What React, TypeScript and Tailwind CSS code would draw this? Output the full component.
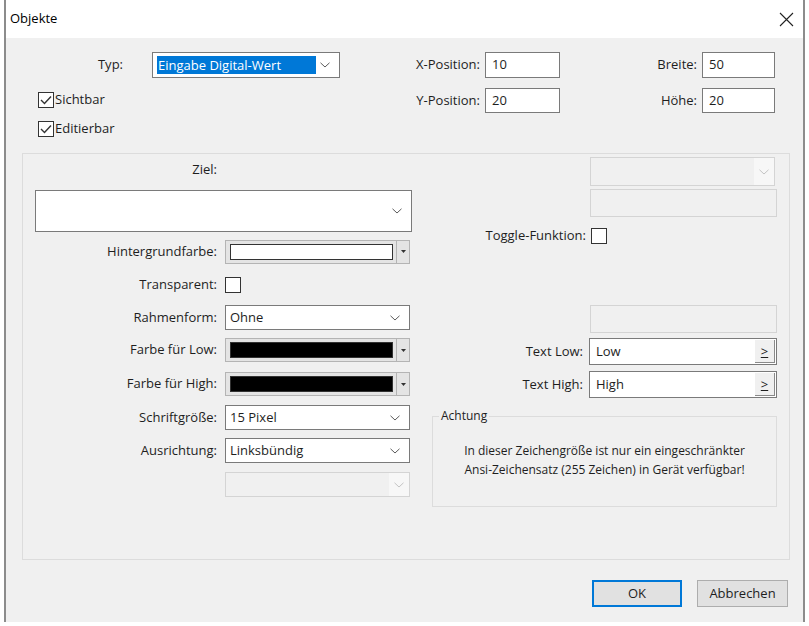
import React from 'react'

function Chevron({ light }: { light?: boolean }) {
  return (
    <svg width="10" height="6" viewBox="0 0 10 6" className="shrink-0">
      <path d="M0.5 0.8 L5 5 L9.5 0.8" stroke={light ? '#c4c4c4' : '#5a5a5a'} strokeWidth="1" fill="none" />
    </svg>
  )
}

function Combo({ value, className = '', selected }: { value?: string; className?: string; selected?: boolean }) {
  return (
    <div className={`flex items-center bg-white border border-[#7a7a7a] pr-[9px] ${className}`}>
      <div className="flex-1 pl-[4px] flex items-center">
        {selected ? (
          <span className="bg-[#0078d7] text-white px-[1px] leading-[18px] w-[159px]">{value}</span>
        ) : (
          <span>{value}</span>
        )}
      </div>
      <Chevron />
    </div>
  )
}

function DisabledCombo({ className = '' }: { className?: string }) {
  return (
    <div className={`flex items-center bg-[#f0f0f0] border border-[#d4d4d4] ${className}`}>
      <div className="flex-1" />
      <div className="h-full w-[20px] bg-[#f7f7f7] flex items-center justify-center">
        <Chevron light />
      </div>
    </div>
  )
}

function ColorPick({ color }: { color: string }) {
  return (
    <div className="flex items-center w-[185px] h-[24px] bg-[#e4e4e4] border border-[#b4b4b4]">
      <div className={`ml-[4px] w-[163px] h-[16px] border border-[#333] ${color}`} />
      <div className="ml-[3px] h-full border-l border-[#b4b4b4] flex-1 flex items-center justify-center">
        <svg width="5" height="3" viewBox="0 0 5 3">
          <path d="M0 0 L5 0 L2.5 3 Z" fill="#333" />
        </svg>
      </div>
    </div>
  )
}

function Check({ checked }: { checked?: boolean }) {
  return (
    <div className="w-[16px] h-[16px] border border-[#333] bg-white flex items-center justify-center shrink-0">
      {checked && (
        <svg width="12" height="10" viewBox="0 0 12 10">
          <path d="M1 5 L4.5 8.5 L11 1.5" stroke="#333" strokeWidth="1.4" fill="none" />
        </svg>
      )}
    </div>
  )
}

function TextBox({ value, className = '' }: { value: string; className?: string }) {
  return (
    <div className={`bg-white border border-[#7a7a7a] pl-[6px] flex items-center ${className}`}>{value}</div>
  )
}

function MoreField({ value }: { value: string }) {
  return (
    <div className="flex w-[188px] h-[27px] bg-white border border-[#7a7a7a]">
      <div className="flex-1 pl-[6px] flex items-center">{value}</div>
      <div className="w-[20px] m-[1px] bg-[#f0f0f0] border-r border-b border-[#8a8a8a] flex items-center justify-center text-[13px] leading-none">
        <span className="underline">&gt;</span>
      </div>
    </div>
  )
}

function Row({ label, children, className = '' }: { label: string; children: React.ReactNode; className?: string }) {
  return (
    <div className={`flex items-center ${className}`}>
      <div className="w-[182px] text-right">{label}</div>
      <div className="ml-[8px]">{children}</div>
    </div>
  )
}

export default function App() {
  return (
    <div className="w-[809px] h-[626px] bg-white overflow-hidden text-[13px] text-[#1e1e1e] font-['Open_Sans','Noto_Sans',sans-serif]">
      <div className="ml-[4px] w-[801px] h-[622px] border-x-2 border-[#8c8c8c] flex flex-col">
        {/* Titelleiste */}
        <div className="h-[38px] shrink-0 bg-white flex items-center justify-between pl-[4px] pr-[9px]">
          <span className="text-[13px] text-black">Objekte</span>
          <svg width="15" height="15" viewBox="0 0 15 15">
            <path d="M1 1 L14 14 M14 1 L1 14" stroke="#222" strokeWidth="1.1" />
          </svg>
        </div>

        <div className="flex-1 bg-[#f0f0f0] pt-[14px] flex flex-col">
          {/* Kopfbereich */}
          <div className="flex">
            <div className="w-[402px]">
              <div className="flex items-center h-[26px]">
                <div className="w-[117px] text-right">Typ:</div>
                <Combo value="Eingabe Digital-Wert" selected className="ml-[29px] w-[188px] h-[26px]" />
              </div>
              <div className="flex items-center gap-[1px] pl-[32px] mt-[14px] h-[16px]">
                <Check checked />
                <span>Sichtbar</span>
              </div>
              <div className="flex items-center gap-[1px] pl-[32px] mt-[13px] h-[16px]">
                <Check checked />
                <span>Editierbar</span>
              </div>
            </div>
            <div>
              <div className="flex items-center h-[26px]">
                <div className="w-[72px] text-right">X-Position:</div>
                <TextBox value="10" className="ml-[5px] w-[75px] h-[26px]" />
                <div className="w-[137px] text-right">Breite:</div>
                <TextBox value="50" className="ml-[5px] w-[73px] h-[26px]" />
              </div>
              <div className="flex items-center h-[25px] mt-[10px]">
                <div className="w-[72px] text-right">Y-Position:</div>
                <TextBox value="20" className="ml-[5px] w-[75px] h-[25px]" />
                <div className="w-[137px] text-right">Höhe:</div>
                <TextBox value="20" className="ml-[5px] w-[73px] h-[25px]" />
              </div>
            </div>
          </div>

          {/* Gruppe */}
          <div className="ml-[16px] mt-[16px] w-[768px] h-[407px] border border-[#dcdcdc] flex">
            <div className="w-[407px] pl-[12px]">
              <div className="mt-[6px] h-[20px] flex items-center">
                <div className="w-[182px] text-right">Ziel:</div>
              </div>
              <Combo className="mt-[10px] w-[377px] h-[42px]" />
              <Row label="Hintergrundfarbe:" className="mt-[8px] h-[23px]">
                <ColorPick color="bg-white" />
              </Row>
              <Row label="Transparent:" className="mt-[14px] h-[16px]">
                <Check />
              </Row>
              <Row label="Rahmenform:" className="mt-[12px] h-[25px]">
                <Combo value="Ohne" className="w-[185px] h-[25px]" />
              </Row>
              <Row label="Farbe für Low:" className="mt-[8px] h-[24px]">
                <ColorPick color="bg-black" />
              </Row>
              <Row label="Farbe für High:" className="mt-[10px] h-[24px]">
                <ColorPick color="bg-black" />
              </Row>
              <Row label="Schriftgröße:" className="mt-[9px] h-[25px]">
                <Combo value="15 Pixel" className="w-[185px] h-[25px]" />
              </Row>
              <Row label="Ausrichtung:" className="mt-[8px] h-[25px]">
                <Combo value="Linksbündig" className="w-[185px] h-[25px]" />
              </Row>
              <div className="mt-[9px] ml-[190px]">
                <DisabledCombo className="w-[185px] h-[25px]" />
              </div>
            </div>

            <div className="w-[347px]">
              <DisabledCombo className="ml-[160px] mt-[3px] w-[185px] h-[29px]" />
              <div className="ml-[160px] mt-[3px] w-[187px] h-[28px] bg-[#f0f0f0] border border-[#d4d4d4]" />
              <div className="flex items-center mt-[11px] h-[16px]">
                <div className="w-[156px] text-right">Toggle-Funktion:</div>
                <div className="ml-[5px]">
                  <Check />
                </div>
              </div>
              <div className="ml-[160px] mt-[61px] w-[187px] h-[28px] bg-[#f0f0f0] border border-[#d4d4d4]" />
              <div className="flex items-center mt-[5px] h-[27px]">
                <div className="w-[153px] text-right">Text Low:</div>
                <div className="ml-[6px]">
                  <MoreField value="Low" />
                </div>
              </div>
              <div className="flex items-center mt-[6px] h-[27px]">
                <div className="w-[153px] text-right">Text High:</div>
                <div className="ml-[6px]">
                  <MoreField value="High" />
                </div>
              </div>
              <fieldset className="ml-[2px] mt-[10px] w-[345px] h-[99px] border border-[#dcdcdc]">
                <legend className="ml-[6px] px-[2px] text-[12px] leading-[16px]">Achtung</legend>
                <div className="mt-[17px] text-center text-[12px] leading-[19px]">
                  In dieser Zeichengröße ist nur ein eingeschränkter
                  <br />
                  Ansi-Zeichensatz (255 Zeichen) in Gerät verfügbar!
                </div>
              </fieldset>
            </div>
          </div>

          {/* Schaltflächen */}
          <div className="flex justify-end gap-[15px] pr-[15px] mt-[20px]">
            <button className="w-[90px] h-[27px] bg-[#e1e1e1] border-2 border-[#0078d7] text-[13px]">OK</button>
            <button className="w-[91px] h-[27px] bg-[#e1e1e1] border border-[#adadad] text-[13px]">Abbrechen</button>
          </div>
        </div>
      </div>
    </div>
  )
}
